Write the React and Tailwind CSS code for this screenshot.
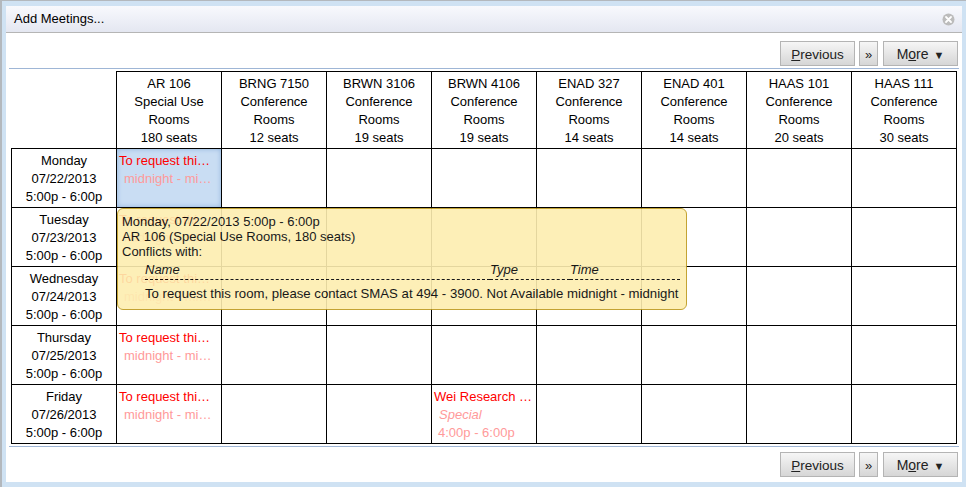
import React from 'react';

const rooms = [
  { name: 'AR 106', type: ['Special Use', 'Rooms'], seats: 180 },
  { name: 'BRNG 7150', type: ['Conference', 'Rooms'], seats: 12 },
  { name: 'BRWN 3106', type: ['Conference', 'Rooms'], seats: 19 },
  { name: 'BRWN 4106', type: ['Conference', 'Rooms'], seats: 19 },
  { name: 'ENAD 327', type: ['Conference', 'Rooms'], seats: 14 },
  { name: 'ENAD 401', type: ['Conference', 'Rooms'], seats: 14 },
  { name: 'HAAS 101', type: ['Conference', 'Rooms'], seats: 20 },
  { name: 'HAAS 111', type: ['Conference', 'Rooms'], seats: 30 },
];

const days = [
  ['Monday', '07/22/2013'],
  ['Tuesday', '07/23/2013'],
  ['Wednesday', '07/24/2013'],
  ['Thursday', '07/25/2013'],
  ['Friday', '07/26/2013'],
];

const Pager = () => (
  <div className="flex justify-end gap-[4px] pr-[4px]">
    <button className="h-[25px] w-[75px] border border-[#b4b4b4] bg-gradient-to-b from-[#f6f6f6] to-[#d6d6d6] pt-[2px] text-[13.5px] text-[#222]">
      <span className="underline">P</span>revious
    </button>
    <button className="h-[25px] w-[19px] border border-[#b4b4b4] bg-gradient-to-b from-[#f6f6f6] to-[#d6d6d6] pt-[2px] text-[13px] text-[#222]">
      »
    </button>
    <button className="ml-[1px] h-[25px] w-[75px] border border-[#b4b4b4] bg-gradient-to-b from-[#f6f6f6] to-[#d6d6d6] pt-[2px] text-[14px] text-[#222]">
      M<span className="underline">o</span>re <span className="ml-[1px] text-[11px]">▼</span>
    </button>
  </div>
);

const Busy = () => (
  <div className="w-[99px] pt-[3px] text-left">
    <div className="truncate pl-[2px] text-[#ff0000]">To request this room</div>
    <div className="truncate pl-[7px] text-[#ff9a9a]">midnight - midnight</div>
  </div>
);

const Wei = () => (
  <div className="w-[101px] pt-[3px] text-left">
    <div className="truncate pl-[2px] text-[#ff0000]">Wei Research Group</div>
    <div className="pl-[7px] italic text-[#ff9a9a]">Special</div>
    <div className="pl-[6px] text-[#ff9a9a]">4:00p - 6:00p</div>
  </div>
);

const ConflictTip = () => (
  <div className="absolute left-[106px] top-[137px] h-[102px] w-[570px] rounded-[6px] border border-[#bd9a1e] bg-[#fdeeb0] pl-[4px] pt-[5px] text-[13px] leading-[15px] text-black opacity-90">
    <div>Monday, 07/22/2013 5:00p - 6:00p</div>
    <div>AR 106 (Special Use Rooms, 180 seats)</div>
    <div>Conflicts with:</div>
    <table className="ml-[23px] mt-[3px] w-[535px] table-fixed border-collapse">
      <thead>
        <tr className="border-b border-dashed border-black italic">
          <th className="w-[345px] pb-[2px] text-left font-normal">Name</th>
          <th className="w-[80px] pb-[2px] text-left font-normal">Type</th>
          <th className="pb-[2px] text-left font-normal">Time</th>
        </tr>
      </thead>
      <tbody>
        <tr>
          <td colSpan={3} className="whitespace-nowrap pt-[6px] text-[13.2px]">
            To request this room, please contact SMAS at 494 - 3900. Not Available midnight - midnight
          </td>
        </tr>
      </tbody>
    </table>
  </div>
);

export default function App() {
  return (
    <div className="h-[487px] w-[966px] overflow-hidden border-l-[2px] border-t-[1px] border-[#b3b8bd] bg-[#cfe2f3] pl-[4px] pr-[4px] pt-[5px] font-['Liberation_Sans',sans-serif] text-[13px] leading-[18px] text-black">
      <div className="h-[476px] w-[956px] bg-white">
        <div className="flex h-[27px] items-center justify-between border-b border-[#b5b5b5] bg-gradient-to-b from-[#f8f9fd] to-[#e4e7f1] pl-[8px] pr-[7px]">
          <span className="text-[13px]">Add Meetings...</span>
          <svg width="13" height="13" viewBox="0 0 13 13">
            <circle cx="6.5" cy="6.5" r="6" fill="#bcbcbc" />
            <path d="M4 4l5 5M9 4l-5 5" stroke="#fff" strokeWidth="1.8" strokeLinecap="round" />
          </svg>
        </div>
        <div className="pt-[8px]">
          <Pager />
        </div>
        <div className="mx-[3px] mt-[2px] border-b border-[#9fb6d6]" />
        <div className="relative ml-[5px] mt-[2px] w-[946px]">
          <table className="w-[946px] table-fixed border-collapse text-center">
            <thead>
              <tr className="h-[77px]">
                <th className="w-[105px] border-b border-black font-normal" />
                {rooms.map((room) => (
                  <th key={room.name} className="w-[105px] border border-black pt-[1px] font-normal">
                    <div>{room.name}</div>
                    {room.type.map((t) => (
                      <div key={t}>{t}</div>
                    ))}
                    <div>{room.seats} seats</div>
                  </th>
                ))}
              </tr>
            </thead>
            <tbody>
              {days.map(([day, date], row) => (
                <tr key={day} className="h-[59px]">
                  <td className="border border-black pt-[1px]">
                    <div>{day}</div>
                    <div>{date}</div>
                    <div>5:00p - 6:00p</div>
                  </td>
                  {rooms.map((room, col) => (
                    <td
                      key={room.name}
                      className={
                        row === 0 && col === 0
                          ? 'border border-black bg-[#c9ddf3] align-top shadow-[inset_0_0_5px_#8fb2dc]'
                          : 'border border-black align-top'
                      }
                    >
                      {col === 0 && <Busy />}
                      {col === 3 && row === 4 && <Wei />}
                    </td>
                  ))}
                </tr>
              ))}
            </tbody>
          </table>
          <ConflictTip />
        </div>
        <div className="mx-[3px] mt-[2px] border-b border-[#9fb6d6]" />
        <div className="pt-[5px]">
          <Pager />
        </div>
      </div>
    </div>
  );
}
